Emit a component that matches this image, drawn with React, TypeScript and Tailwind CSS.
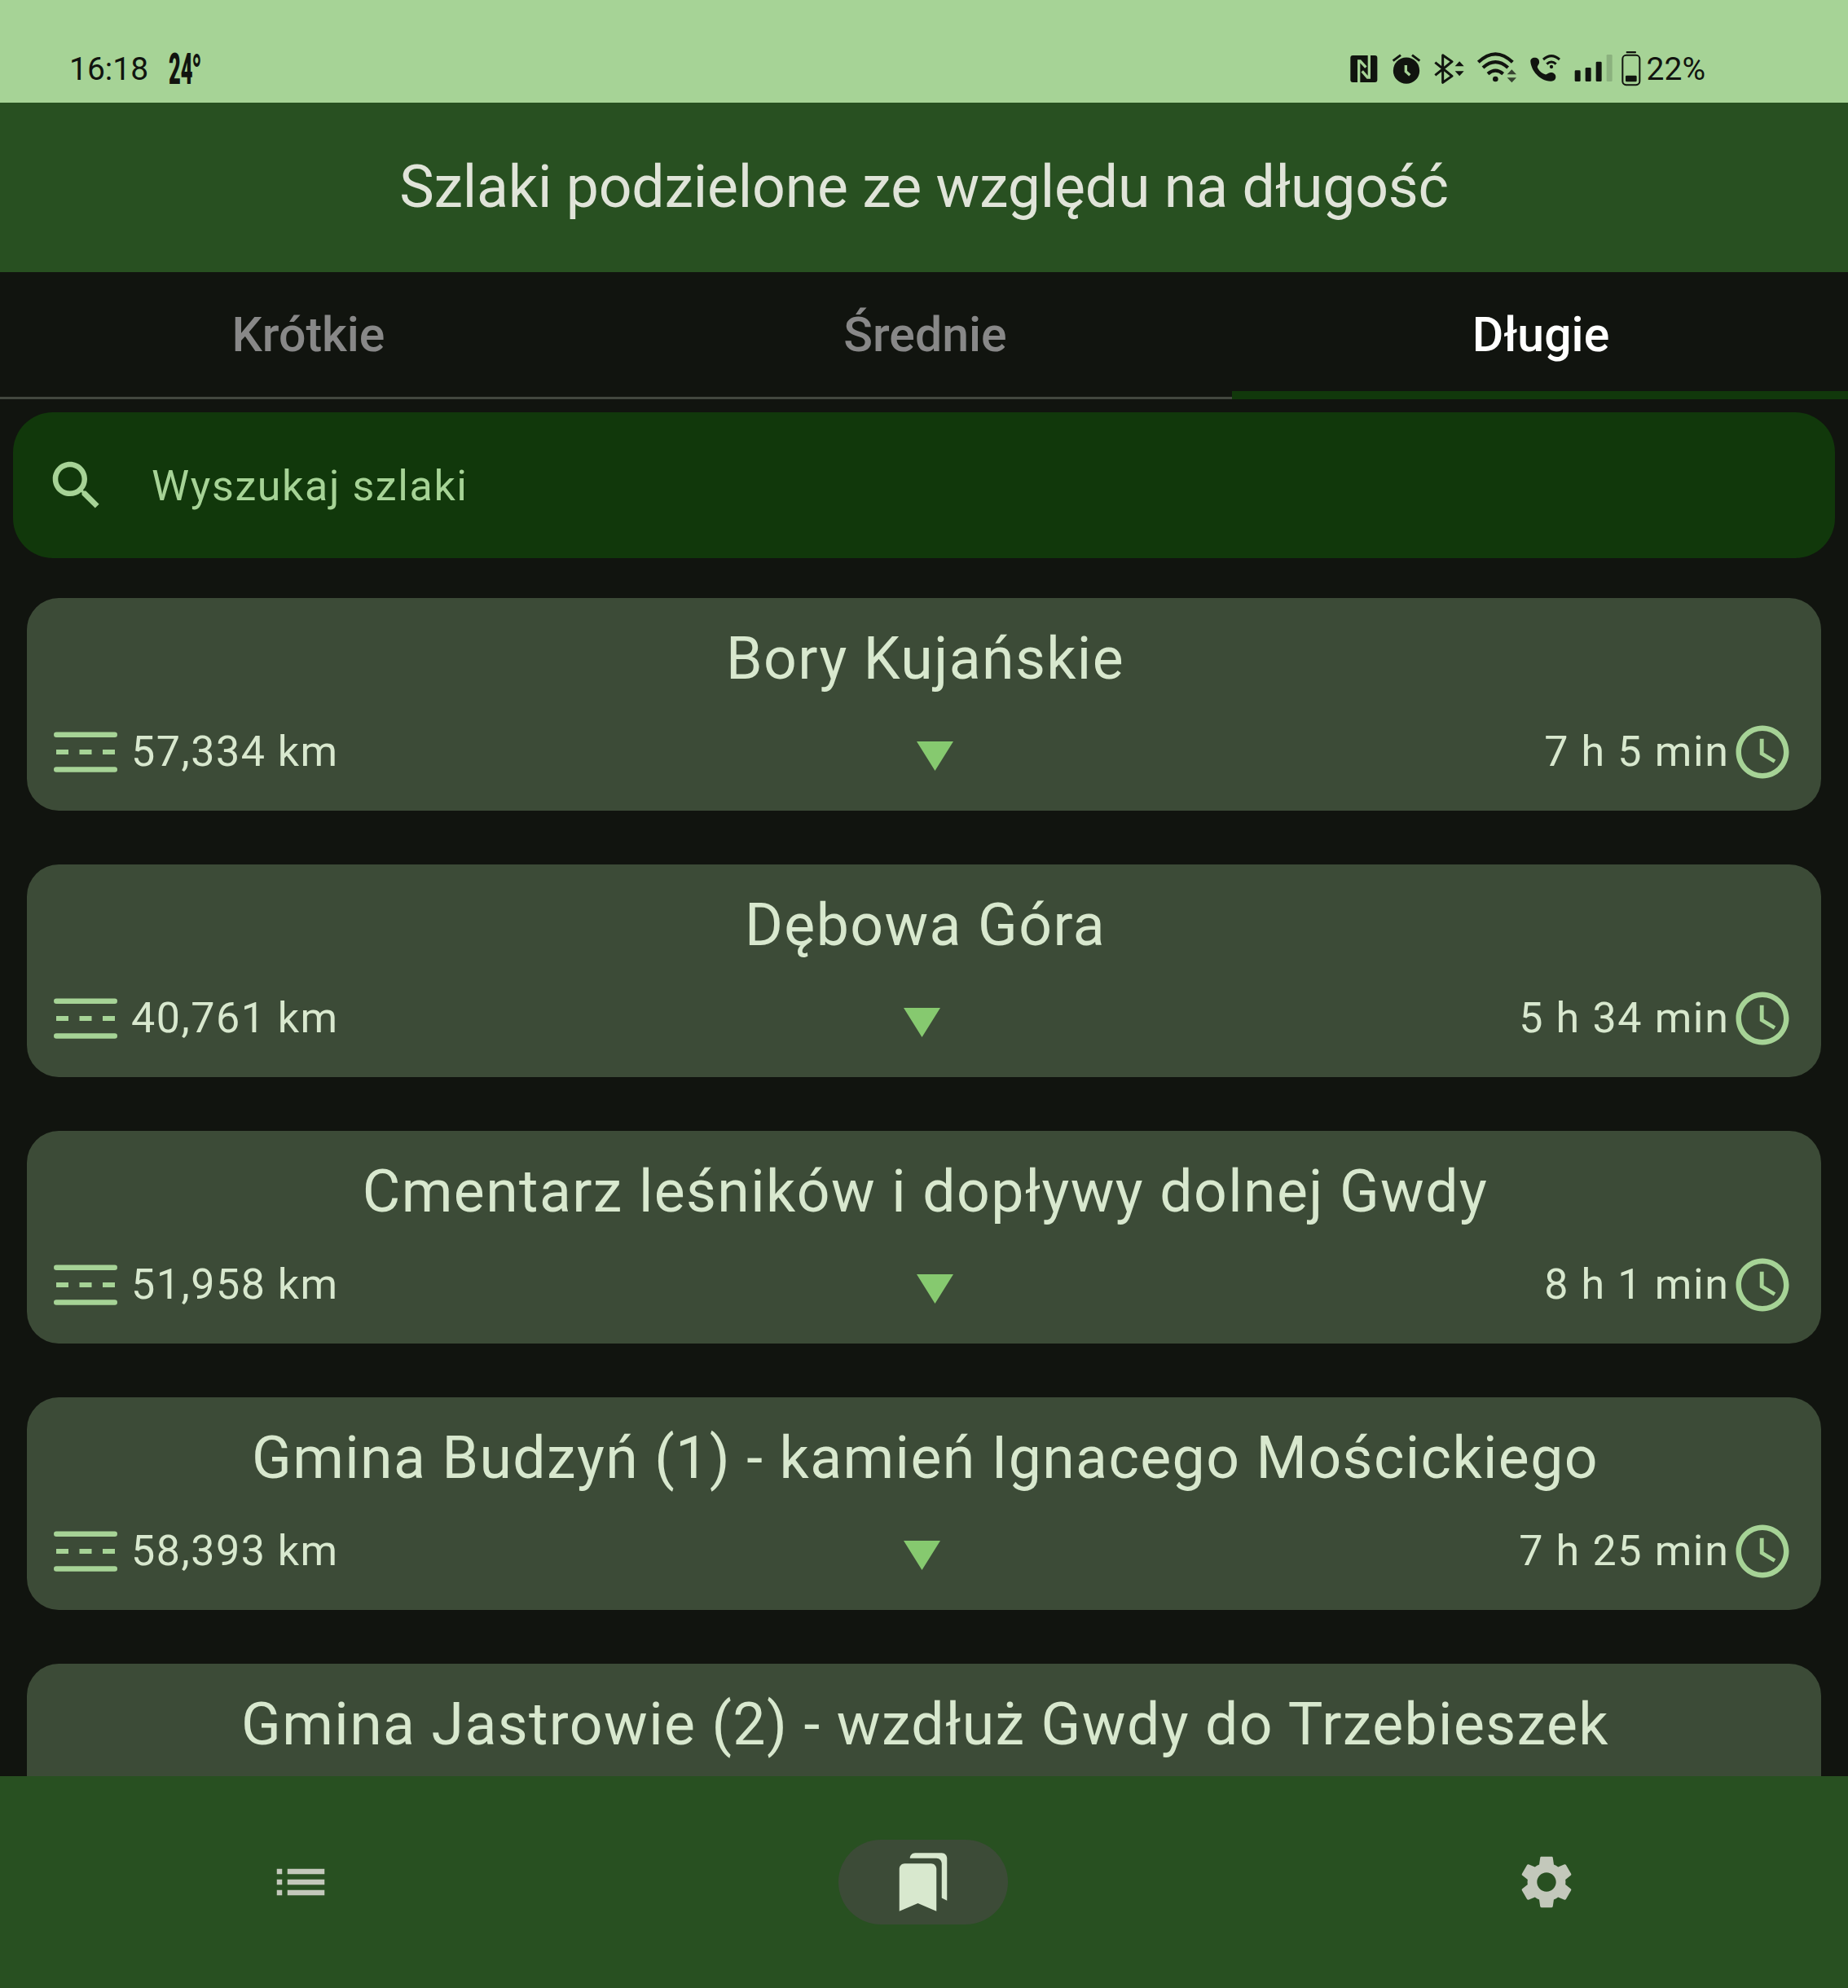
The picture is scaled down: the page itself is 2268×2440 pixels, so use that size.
import type { ReactNode } from "react";

interface Trail {
  name: string;
  distance?: string;
  time?: string;
}

const trails: Trail[] = [
  { name: "Bory Kujańskie", distance: "57,334 km", time: "7 h 5 min" },
  { name: "Dębowa Góra", distance: "40,761 km", time: "5 h 34 min" },
  { name: "Cmentarz leśników i dopływy dolnej Gwdy", distance: "51,958 km", time: "8 h 1 min" },
  { name: "Gmina Budzyń (1) - kamień Ignacego Mościckiego", distance: "58,393 km", time: "7 h 25 min" },
  { name: "Gmina Jastrowie (2) - wzdłuż Gwdy do Trzebieszek" },
];

function Icon({ children, className = "" }: { children: ReactNode; className?: string }) {
  return (
    <svg viewBox="0 0 24 24" fill="currentColor" className={`h-[78px] w-[78px] shrink-0 ${className}`}>
      {children}
    </svg>
  );
}

function StatusIcons() {
  return (
    <div className="flex h-20 items-center">
      {/* NFC */}
      <svg viewBox="0 0 180 240" className="h-20 w-[60px]" fill="currentColor">
        <rect x="52" y="54" width="99" height="99" rx="9" />
        <g stroke="#a6d396" strokeWidth="10" fill="none">
          <path d="M83 154V75H88L109 98" />
          <path d="M121 53V135H115L95 112" />
        </g>
      </svg>
      {/* Alarm */}
      <svg viewBox="180 0 160 240" className="h-20 w-[53.333px]" fill="currentColor">
        <circle cx="258" cy="110" r="48.500" />
        <path d="M209 74L237 53M279 53L307 74" stroke="currentColor" strokeWidth="9" />
        <path d="M256 90V113L271 127" stroke="#a6d396" strokeWidth="10" fill="none" />
      </svg>
      {/* Bluetooth */}
      <svg viewBox="340 0 160 240" className="h-20 w-[53.333px]" fill="currentColor">
        <path d="M362 80L424 130L390 154V53L424 77L362 127" fill="none" stroke="currentColor" strokeWidth="9" strokeLinejoin="round" />
        <path d="M435 94L451.500 76L468 94ZM435 112H468L451.500 130Z" />
      </svg>
      {/* Wi-Fi */}
      <svg viewBox="500 0 180 240" className="h-20 w-[60px]" fill="currentColor">
        <g fill="none" stroke="currentColor" strokeWidth="12.500">
          <path d="M522 79Q585 19 648 79" />
          <path d="M539 99Q585 58 631 99" />
          <path d="M557 122Q585 98 613 122" />
        </g>
        <circle cx="585" cy="141" r="10" />
        <path d="M628 124L645 106L662 124ZM628 136H662L645 154Z" opacity="0.75" />
      </svg>
      {/* Wi-Fi calling */}
      <svg viewBox="-10 0 170 240" className="h-20 w-[56.667px]" fill="currentColor">
        <path d="M24 77C23 66 32 61 42 62C53 63 58 73 56 82C54 90 47 93 51 101C57 113 69 121 78 124C85 126 88 117 98 117C109 117 117 123 117 133C117 144 109 150 98 149C56 146 28 111 24 77Z" />
        <g fill="none" stroke="currentColor" strokeWidth="9">
          <path d="M71 69Q101 43 131 69" />
          <path d="M84 86Q101 70 118 86" />
        </g>
        <circle cx="101" cy="96" r="6.500" />
      </svg>
      {/* Signal */}
      <svg viewBox="160 0 184 240" className="h-20 w-[61.333px]" fill="currentColor">
        <rect x="186" y="109" width="21" height="41" rx="4" />
        <rect x="225" y="99" width="21" height="51" rx="4" />
        <rect x="264" y="77" width="21" height="73" rx="4" />
        <rect x="303" y="51" width="21" height="99" rx="4" opacity="0.18" />
      </svg>
      {/* Battery */}
      <svg viewBox="344 0 104 240" className="h-20 w-[34.667px]" fill="currentColor">
        <rect x="376" y="39" width="37" height="7" rx="3" />
        <rect x="363" y="53.500" width="63" height="109" rx="13" fill="none" stroke="currentColor" strokeWidth="6" />
        <rect x="374" y="128" width="41" height="23" rx="4" />
      </svg>
    </div>
  );
}

function TrailCard({ name, distance, time }: Trail) {
  return (
    <article className="flex h-[261px] shrink-0 flex-col gap-[33px] rounded-[39px] bg-[#3c4b37] p-[33px] text-[#d8e8ce]">
      <h2 className="pl-[3px] text-center text-[71.5px] leading-[84px] tracking-[1.42px] whitespace-nowrap">{name}</h2>
      {distance && time && (
        <div className="flex h-[78px] items-center justify-between text-[52px] leading-[78px] tracking-[1.5px] whitespace-nowrap">
          <div className="flex items-center gap-[17px]">
            <svg viewBox="0 0 78 78" className="h-[78px] w-[78px] text-[#a6d396]" fill="currentColor">
              <rect x="0" y="14.500" width="78" height="6.500" rx="3.250" />
              <rect x="3" y="36" width="15" height="6" />
              <rect x="31.500" y="36" width="15" height="6" />
              <rect x="60" y="36" width="15" height="6" />
              <rect x="0" y="57.200" width="78" height="6.500" rx="3.250" />
            </svg>
            <span>{distance}</span>
          </div>
          <svg viewBox="0 0 45 36" className="mt-[10px] mr-[16px] h-9 w-[45px]" fill="#86c96f">
            <path d="M0 0H45L22.500 36Z" />
          </svg>
          <div className="flex items-center">
            <span className="mr-[1.5px] tracking-[1.625px]">{time}</span>
            <Icon className="text-[#a6d396]">
              <path d="M11.990 2C6.470 2 2 6.480 2 12s4.470 10 9.990 10C17.520 22 22 17.520 22 12S17.520 2 11.990 2zM12 20c-4.420 0-8-3.580-8-8s3.580-8 8-8 8 3.580 8 8-3.580 8-8 8zm.5-13H11v6l5.250 3.150.75-1.230-4.500-2.670z" />
            </Icon>
          </div>
        </div>
      )}
    </article>
  );
}

export default function App() {
  return (
    <div className="flex h-[2440px] w-[2268px] flex-col overflow-hidden bg-[#11140f] font-[Roboto,sans-serif] text-[#e0e4d9]">
      <div className="flex h-[126px] shrink-0 items-start justify-between bg-[#a6d396] pr-[175px] pl-[85px] text-[#11140f]">
        <div className="mt-[45px] flex h-20 items-center">
          <span className="mr-[25px] text-[39px] leading-[80px]">16:18</span>
          <span className="w-[28px] origin-left scale-x-48 text-[53px] leading-[80px] font-black">24</span>
          <span className="mt-[7px] w-[12px] origin-left scale-x-55 text-[60px] leading-[80px] font-bold">°</span>
        </div>
        <div className="flex items-start">
          <div className="mt-[50px] mr-px -ml-px">
            <StatusIcons />
          </div>
          <span className="mt-[45px] text-[39px] leading-[80px]">22%</span>
        </div>
      </div>

      <header className="flex h-[208px] shrink-0 items-center justify-center bg-[#285021]">
        <h1 className="text-[71.5px] leading-[84px] tracking-[-0.15px] whitespace-nowrap">Szlaki podzielone ze względu na długość</h1>
      </header>

      <nav className="grid h-[156px] shrink-0 grid-cols-3 text-center text-[59px] leading-[154px] font-medium">
        <div className="h-[156px] border-b-[3px] border-[#43483f] pl-px text-[#888888]">Krótkie</div>
        <div className="h-[156px] border-b-[3px] border-[#43483f] pl-[3px] text-[#888888]">Średnie</div>
        <div className="h-[156px] border-b-[10px] border-[#11380b] pl-[2px] text-white">Długie</div>
      </nav>

      <main className="flex min-h-0 flex-1 flex-col overflow-hidden">
        <div className="mx-4 mt-4 flex h-[179px] shrink-0 items-center gap-[53px] rounded-[49px] bg-[#11380b] pl-[39px] text-[52px] tracking-[1.6px] text-[#a6d396]">
          <Icon>
            <path d="M15.500 14h-.79l-.28-.27C15.410 12.590 16 11.110 16 9.500 16 5.910 13.090 3 9.500 3S3 5.910 3 9.500 5.910 16 9.500 16c1.610 0 3.090-.59 4.230-1.570l.27.28v.79l5 4.990L20.490 19l-4.990-5zm-6 0C7.010 14 5 11.990 5 9.500S7.010 5 9.500 5 14 7.010 14 9.500 11.990 14 9.500 14z" />
          </Icon>
          <span className="pt-[2px]">Wyszukaj szlaki</span>
        </div>
        <div className="mt-[49px] flex flex-col gap-[66px] px-[33px]">
          {trails.map((trail) => (
            <TrailCard key={trail.name} {...trail} />
          ))}
        </div>
      </main>

      <footer className="grid h-[260px] shrink-0 grid-cols-3 gap-[26px] bg-[#285021] text-[#c3c8bb]">
        <div className="flex items-center justify-center">
          <Icon>
            <path d="M3 13h2v-2H3v2zm0 4h2v-2H3v2zm0-8h2V7H3v2zm4 4h14v-2H7v2zm0 4h14v-2H7v2zM7 7v2h14V7H7z" />
          </Icon>
        </div>
        <div className="flex items-center justify-center pr-[2px]">
          <div className="flex h-[104px] w-[208px] items-center justify-center rounded-full bg-[#3c4b37] text-[#d8e8ce]">
            <Icon>
              <path d="M19 18l2 1V3c0-1.100-.9-2-2-2H8.990C7.890 1 7 1.900 7 3h10c1.100 0 2 .9 2 2v13zM15 5H5c-1.100 0-2 .9-2 2v16l7-3 7 3V7c0-1.100-.9-2-2-2z" />
            </Icon>
          </div>
        </div>
        <div className="flex items-center justify-center pr-[2px]">
          <Icon>
            <path d="M19.140 12.940c.04-.3.060-.61.060-.94 0-.32-.02-.64-.07-.94l2.030-1.580c.18-.14.230-.41.120-.61l-1.920-3.320c-.12-.22-.37-.29-.59-.22l-2.390.96c-.5-.38-1.030-.7-1.620-.94l-.36-2.540c-.04-.24-.24-.41-.48-.41h-3.840c-.24 0-.43.17-.47.410l-.36 2.540c-.59.240-1.130.570-1.620.940l-2.390-.96c-.22-.08-.47 0-.59.220L2.740 8.870c-.12.210-.08.470.12.610l2.030 1.580c-.05.300-.09.630-.09.940s.02.640.07.940l-2.030 1.580c-.18.140-.23.410-.12.610l1.920 3.320c.12.220.37.290.59.220l2.390-.96c.5.380 1.030.7 1.620.940l.36 2.540c.05.240.24.410.48.410h3.840c.24 0 .44-.17.470-.41l.36-2.540c.59-.24 1.130-.56 1.620-.94l2.390.96c.22.080.47 0 .59-.22l1.920-3.320c.12-.22.070-.47-.12-.61l-2.010-1.580zM12 15.600c-1.980 0-3.600-1.620-3.600-3.600s1.620-3.600 3.600-3.600 3.600 1.620 3.600 3.600-1.620 3.600-3.600 3.600z" />
          </Icon>
        </div>
      </footer>
    </div>
  );
}
